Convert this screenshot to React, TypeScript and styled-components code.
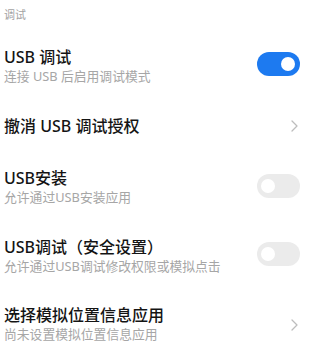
import React from 'react';
import styled, { createGlobalStyle } from 'styled-components';

const GlobalStyle = createGlobalStyle`
  html, body {
    margin: 0;
    padding: 0;
    background: #ffffff;
  }
  body {
    font-family: "Noto Sans", "Noto Sans CJK SC", sans-serif;
  }
`;

const Page = styled.div`
  width: 309px;
  height: 350px;
  overflow: hidden;
  background: #ffffff;
`;

const SectionHeader = styled.div`
  padding: 8px 0 10px 4px;
  font-size: 11px;
  line-height: 14px;
  color: #a3a3a3;
`;

const Row = styled.div<{ $single?: boolean }>`
  display: flex;
  align-items: center;
  justify-content: space-between;
  padding: ${(p) => (p.$single ? '15px 9px 18px 4px' : '14.5px 9px 15px 4px')};
`;

const TextBlock = styled.div`
  display: flex;
  flex-direction: column;
  min-width: 0;
`;

const Title = styled.div`
  font-size: 16px;
  line-height: 20px;
  font-weight: 500;
  color: #141414;
`;

const Subtitle = styled.div`
  font-size: 12.8px;
  line-height: 19px;
  color: #a6a6a6;
`;

const SwitchTrack = styled.div<{ $on?: boolean }>`
  position: relative;
  flex: none;
  width: 43px;
  height: 24px;
  margin-bottom: 4px;
  border-radius: 12px;
  background: ${(p) => (p.$on ? '#1d7af0' : '#ebebeb')};
`;

const SwitchKnob = styled.div<{ $on?: boolean }>`
  position: absolute;
  top: 5px;
  ${(p) => (p.$on ? 'right: 5px;' : 'left: 4px;')}
  width: 14px;
  height: 14px;
  border-radius: 50%;
  background: #ffffff;
`;

const Chevron = styled.svg`
  flex: none;
  width: 7px;
  height: 12px;
  margin-right: 2px;
`;

const Toggle: React.FC<{ on?: boolean }> = ({ on }) => (
  <SwitchTrack $on={on}>
    <SwitchKnob $on={on} />
  </SwitchTrack>
);

const Arrow = () => (
  <Chevron viewBox="0 0 7 12">
    <path d="M1 1l5 5-5 5" fill="none" stroke="#bdbdbd" strokeWidth="1.3" strokeLinecap="round" strokeLinejoin="round" />
  </Chevron>
);

export default function App() {
  return (
    <Page>
      <GlobalStyle />
      <SectionHeader>调试</SectionHeader>
      <Row>
        <TextBlock>
          <Title>USB 调试</Title>
          <Subtitle>连接 USB 后启用调试模式</Subtitle>
        </TextBlock>
        <Toggle on />
      </Row>
      <Row $single>
        <Title>撤消 USB 调试授权</Title>
        <Arrow />
      </Row>
      <Row>
        <TextBlock>
          <Title>USB安装</Title>
          <Subtitle>允许通过USB安装应用</Subtitle>
        </TextBlock>
        <Toggle />
      </Row>
      <Row>
        <TextBlock>
          <Title>USB调试（安全设置）</Title>
          <Subtitle>允许通过USB调试修改权限或模拟点击</Subtitle>
        </TextBlock>
        <Toggle />
      </Row>
      <Row>
        <TextBlock>
          <Title>选择模拟位置信息应用</Title>
          <Subtitle>尚未设置模拟位置信息应用</Subtitle>
        </TextBlock>
        <Arrow />
      </Row>
    </Page>
  );
}
